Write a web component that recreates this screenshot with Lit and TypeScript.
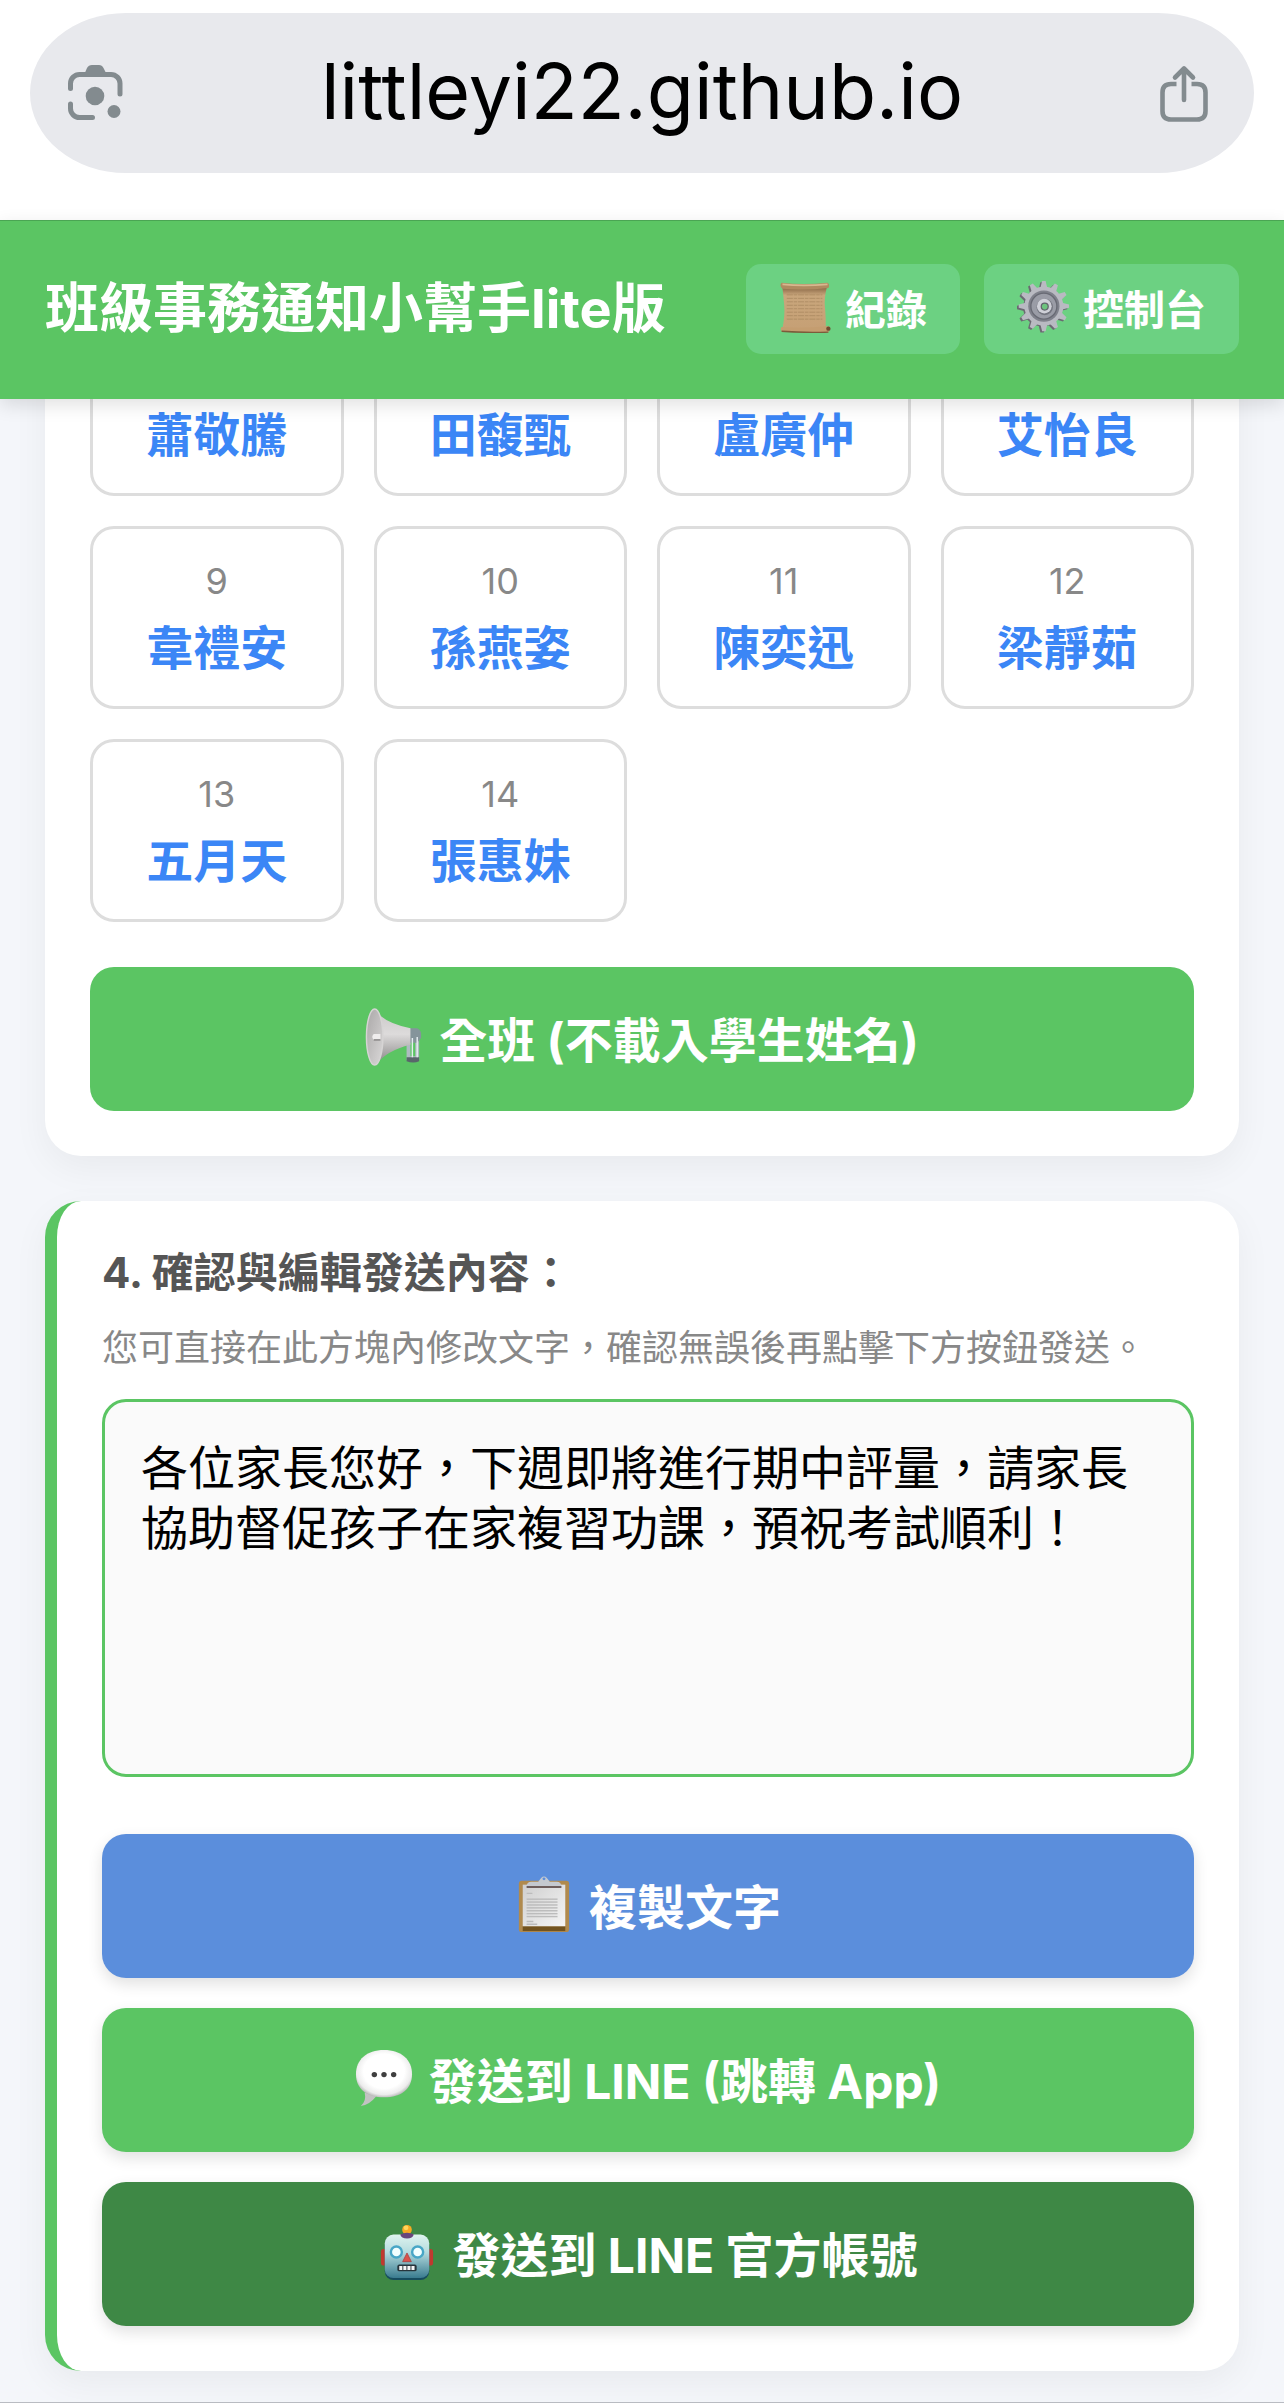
import { LitElement, css, html, svg } from "lit";
import { customElement, state } from "lit/decorators.js";

const SCROLL_LINES = [16, 20, 24, 28, 32, 36, 40, 44];
const PAPER_LINES = [25, 28, 31, 34, 37, 40, 43];
const GEAR_TEETH = Array.from({ length: 12 }, (_, i) => i * 30);

const lensIcon = html`
  <svg viewBox="0 0 60 60" aria-hidden="true">
    <g fill="none" stroke="#838b8f" stroke-width="5" stroke-linecap="round">
      <path d="M3.5 25.500V20.500A9 9 0 0 1 12.500 11.500H44A9 9 0 0 1 53 20.500V31" />
      <path d="M3.500 41V45.500A9 9 0 0 0 12.500 54.500H25.500" />
    </g>
    <path d="M17 12L20 5Q21.500 2 25 2H32Q35 2 36.500 5L40 12Z" fill="#838b8f" />
    <circle cx="28" cy="33" r="9.300" fill="#838b8f" />
    <circle cx="47" cy="48.500" r="6.500" fill="#838b8f" />
  </svg>
`;

const shareIcon = html`
  <svg viewBox="0 0 60 60" aria-hidden="true">
    <g fill="none" stroke="#838b8f" stroke-width="4.600">
      <path d="M19.500 21H14Q5.500 21 5.500 29.500V48Q5.500 56.500 14 56.500H40Q48.500 56.500 48.500 48V29.500Q48.500 21 40 21H34.500" />
      <path d="M27 37V6M18 14.500L27 5.500L36 14.500" stroke-linecap="round" stroke-linejoin="round" />
    </g>
  </svg>
`;

const scrollIcon = html`
  <svg viewBox="0 0 60 60" aria-hidden="true">
    <defs>
      <linearGradient id="paper" x1="0" x2="0" y1="0" y2="1">
        <stop offset="0" stop-color="#8d6a48" />
        <stop offset="0.180" stop-color="#c9a67c" />
        <stop offset="1" stop-color="#c6a075" />
      </linearGradient>
    </defs>
    <path d="M4 8H55Q52 20 53 30T54 55H4Q7 40 6 28T4 8Z" fill="url(#paper)" />
    <g stroke="#ad8b63" stroke-width="1" stroke-dasharray="7 1 4 1">
      ${SCROLL_LINES.map((y) => svg`<path d="M9 ${y}H50" />`)}
    </g>
    <path d="M3 2Q28 5 56 2Q59 4 57 8Q30 11 4 9Q0 5 3 2Z" fill="#b08a60" />
    <path d="M4 4Q28 6 56 4" fill="none" stroke="#d7b78f" stroke-width="2" />
    <path d="M3 53Q28 55 57 52Q60 55 57 59Q30 60 3 58Q1 55 3 53Z" fill="#c49d70" />
    <path d="M3 58Q30 60 57 59" fill="none" stroke="#7c5b3a" stroke-width="1.500" />
    <circle cx="57" cy="55" r="2.500" fill="#6f4c30" />
  </svg>
`;

const gearIcon = html`
  <svg viewBox="0 0 60 60" aria-hidden="true">
    <g transform="translate(-1 0.500)">
      <circle cx="30" cy="30" r="22" fill="#6b6a72" />
      ${GEAR_TEETH.map((a) => svg`<path d="M26 9L28 1H32L34 9Z" fill="#6b6a72" transform="rotate(${a} 30 30)" />`)}
    </g>
    <circle cx="31" cy="29" r="22.500" fill="#b9bac2" />
    ${GEAR_TEETH.map((a) => svg`<path d="M27 8L29 0H33L35 8Z" fill="#b9bac2" transform="rotate(${a} 31 29)" />`)}
    <circle cx="31" cy="29" r="18" fill="#7f818b" />
    <circle cx="31" cy="29" r="15" fill="#9a9ca6" stroke="#686a74" stroke-width="1.500" />
    <circle cx="32" cy="30" r="9.500" fill="#73757f" />
    <circle cx="31.500" cy="29" r="8.500" fill="#cfd0d8" />
    <circle cx="32" cy="29.500" r="4" fill="#6dc47e" stroke="#62656d" stroke-width="1.500" />
  </svg>
`;

const hornIcon = html`
  <svg viewBox="0 0 60 60" aria-hidden="true">
    <defs>
      <linearGradient id="cone" x1="0" x2="0" y1="0" y2="1">
        <stop offset="0" stop-color="#c9c7c7" />
        <stop offset="0.450" stop-color="#dddbdb" />
        <stop offset="1" stop-color="#858383" />
      </linearGradient>
      <linearGradient id="bell" x1="0" x2="1" y1="0" y2="1">
        <stop offset="0" stop-color="#a9a7a7" />
        <stop offset="1" stop-color="#dad8d8" />
      </linearGradient>
    </defs>
    <path d="M43 30V54H56V28H52V50H47V30Z" fill="#aebbc1" />
    <path d="M43 51H56V55Q50 58 43 55Z" fill="#59666b" />
    <path d="M46 21H54Q59 23 58 31L54 36H46Z" fill="#85949b" />
    <path d="M10 1Q18 15 47 21V38Q22 44 11 59Z" fill="url(#cone)" />
    <ellipse cx="10" cy="30" rx="8.500" ry="29" fill="url(#bell)" stroke="#d6d4d4" stroke-width="1.500" />
    <path d="M9 27H16V33H9Q6 30 9 27Z" fill="#efeded" />
    <path d="M9 33H16" stroke="#858383" stroke-width="1.500" />
    <path d="M49 31V51M54 30V51" stroke="#e5edf0" stroke-width="1.500" />
  </svg>
`;

const clipboardIcon = html`
  <svg viewBox="0 0 60 60" aria-hidden="true">
    <defs>
      <linearGradient id="sheet" x1="0" x2="1" y1="0" y2="1">
        <stop offset="0" stop-color="#cfcfcf" />
        <stop offset="1" stop-color="#f5f5f5" />
      </linearGradient>
    </defs>
    <rect x="4" y="6" width="52" height="53" rx="3" fill="#b08a4e" />
    <rect x="8" y="53" width="44" height="5" fill="#72531f" />
    <rect x="8" y="10" width="44" height="43" fill="url(#sheet)" />
    <g stroke="#bcbcbc" stroke-width="1.500">
      <path d="M12 19H18M12 48H19M12 51H23" />
      ${PAPER_LINES.map((y) => svg`<path d="M12 ${y}H44" />`)}
    </g>
    <path d="M12 12Q12 7 17 7H24L27 3Q30 0 33 3L36 7H43Q48 7 48 12Z" fill="#c5c9cf" />
    <path d="M12 12.500H48" stroke="#6e5e5c" stroke-width="2" />
    <circle cx="30" cy="4" r="1.500" fill="#5b8edc" />
  </svg>
`;

const chatIcon = html`
  <svg viewBox="0 0 60 60" aria-hidden="true">
    <defs>
      <radialGradient id="bubble" cx="0.500" cy="0.450" r="0.560">
        <stop offset="0.650" stop-color="#ffffff" />
        <stop offset="0.880" stop-color="#ececec" />
        <stop offset="1" stop-color="#b9b9b9" />
      </radialGradient>
    </defs>
    <path d="M10 45Q12 54 6 59Q15 58 22 49Z" fill="#c2c2c2" />
    <path d="M30 1C48 1 59 11 59 26C59 41 48 50 30 50C12 50 1 41 1 26C1 11 12 1 30 1Z" fill="url(#bubble)" />
    <g fill="#3f3f3f">
      <circle cx="20" cy="26.500" r="2.800" />
      <circle cx="30" cy="26.500" r="2.800" />
      <circle cx="40" cy="26.500" r="2.800" />
    </g>
  </svg>
`;

const robotIcon = html`
  <svg viewBox="0 0 60 60" aria-hidden="true">
    <defs>
      <linearGradient id="face" x1="0" x2="0" y1="0" y2="1">
        <stop offset="0" stop-color="#dff3ef" />
        <stop offset="0.400" stop-color="#b5dcdf" />
        <stop offset="1" stop-color="#397b8f" />
      </linearGradient>
    </defs>
    <rect x="3" y="27" width="6" height="17" rx="3" fill="#c0392f" />
    <rect x="51" y="27" width="6" height="17" rx="3" fill="#c0392f" />
    <circle cx="30" cy="7" r="5" fill="#f7a923" />
    <circle cx="29" cy="5" r="2.500" fill="#ffd65c" />
    <rect x="7" y="14" width="46" height="45" rx="9" fill="#164c5e" />
    <rect x="7" y="12" width="46" height="45" rx="9" fill="url(#face)" />
    <path d="M23 12Q26 10 30 10T37 12Q36 16 30 16T23 12Z" fill="#67467c" />
    <g fill="#f2ffff" stroke="#48a6c6" stroke-width="2.500">
      <circle cx="19" cy="30" r="5.700" />
      <circle cx="41" cy="30" r="5.700" />
    </g>
    <path d="M30 31L34.500 40H25.500Z" fill="#d9534b" stroke="#a83e40" stroke-width="0.800" />
    <rect x="20" y="43" width="20" height="7" rx="2" fill="#27353c" />
    <path d="M22 46.500H38" stroke="#f6f6f6" stroke-width="4" stroke-dasharray="3.200 1" />
  </svg>
`;

@customElement("app-root")
export class AppRoot extends LitElement {
  static styles = css`
    :host {
      display: block;
      min-height: 100vh;
      background: #f4f6fa;
      font-family: Inter, "Noto Sans CJK TC", sans-serif;
      --green: #5bc563;
    }

    * {
      box-sizing: border-box;
    }

    button {
      display: flex;
      align-items: center;
      justify-content: center;
      border: 0;
      padding: 0;
      font-family: inherit;
      cursor: pointer;
    }

    svg {
      display: block;
      width: 100%;
      height: 100%;
    }

    .browser {
      padding: 13px 30px 47px;
      background: #fff;
    }

    .address {
      display: grid;
      grid-template-columns: 60px 1fr 60px;
      align-items: center;
      height: 160px;
      padding: 0 37px;
      border-radius: 96px / 80px;
      background: #e8e9ed;
    }

    .address button {
      height: 60px;
      background: none;
    }

    .address input {
      width: 100%;
      height: 120px;
      border: 0;
      padding: 0 0 4px;
      background: none;
      color: #000;
      font-family: inherit;
      font-size: 77px;
      text-align: center;
    }

    .header {
      position: relative;
      z-index: 1;
      display: flex;
      align-items: center;
      justify-content: space-between;
      padding: 43px 45px 45px;
      border-top: 1px solid #4aa553;
      background: var(--green);
      box-shadow: 0 6px 18px rgba(0, 0, 0, 0.12);
    }

    h1 {
      margin: 0;
      color: #fff;
      font-size: 54px;
      line-height: 72px;
    }

    nav {
      display: flex;
      gap: 24px;
    }

    nav button {
      gap: 14px;
      height: 90px;
      padding: 0 33px 4px;
      border-radius: 15px;
      background: #6cd182;
      color: #fff;
      font-size: 41px;
      font-weight: 700;
    }

    .nav-icon {
      width: 52px;
      height: 52px;
    }

    main {
      display: flex;
      flex-direction: column;
      gap: 45px;
      padding: 0 45px 31px;
      border-bottom: 1px solid #b9bcc2;
    }

    .card {
      padding: 45px;
      border-radius: 36px;
      background: #fff;
      box-shadow: 0 12px 36px rgba(0, 0, 0, 0.05);
    }

    /* the list is scrolled up under the sticky header */
    .students {
      margin-top: -131px;
    }

    .grid {
      display: grid;
      grid-template-columns: repeat(4, 1fr);
      gap: 30px;
      margin-bottom: 45px;
    }

    .student {
      flex-direction: column;
      gap: 15px;
      padding: 30px 0;
      border: 3px solid #ddd;
      border-radius: 24px;
      background: #fff;
    }

    .number {
      color: #888;
      font-size: 36px;
      line-height: 45px;
    }

    .name {
      color: #3b86f6;
      font-size: 47px;
      font-weight: 700;
      line-height: 57px;
    }

    .wide {
      gap: 16px;
      width: 100%;
      height: 144px;
      padding-bottom: 4px;
      border-radius: 24px;
      background: var(--green);
      color: #fff;
      font-size: 48px;
      font-weight: 700;
    }

    .wide-icon {
      width: 58px;
      height: 58px;
    }

    .editor {
      border-left: 12px solid var(--green);
    }

    .editor label {
      display: block;
      color: #555;
      font-size: 42px;
      font-weight: 700;
      line-height: 54px;
    }

    .hint {
      margin: 21px 0 24px;
      color: #888;
      font-size: 36px;
      line-height: 54px;
    }

    textarea {
      display: block;
      width: 100%;
      height: 378px;
      padding: 36px;
      border: 3px solid var(--green);
      border-radius: 24px;
      outline: none;
      resize: none;
      background: #fafafa;
      color: #000;
      font-family: inherit;
      font-size: 47px;
      line-height: 60px;
    }

    .actions {
      display: flex;
      flex-direction: column;
      gap: 30px;
      margin-top: 57px;
    }

    .actions .wide {
      box-shadow: 0 6px 15px rgba(0, 0, 0, 0.12);
    }

    .actions .copy {
      background: #5b8edc;
    }

    .actions .official {
      background: #3e8845;
    }
  `;

  @state()
  private message =
    "各位家長您好，下週即將進行期中評量，請家長協助督促孩子在家複習功課，預祝考試順利！";

  private students = [
    { number: 5, name: "蕭敬騰" },
    { number: 6, name: "田馥甄" },
    { number: 7, name: "盧廣仲" },
    { number: 8, name: "艾怡良" },
    { number: 9, name: "韋禮安" },
    { number: 10, name: "孫燕姿" },
    { number: 11, name: "陳奕迅" },
    { number: 12, name: "梁靜茹" },
    { number: 13, name: "五月天" },
    { number: 14, name: "張惠妹" },
  ];

  render() {
    return html`
      <div class="browser">
        <div class="address">
          <button aria-label="相機搜尋">${lensIcon}</button>
          <input type="text" aria-label="網址" value="littleyi22.github.io" />
          <button aria-label="分享">${shareIcon}</button>
        </div>
      </div>

      <header class="header">
        <h1>班級事務通知小幫手lite版</h1>
        <nav>
          <button><span class="nav-icon">${scrollIcon}</span>紀錄</button>
          <button><span class="nav-icon">${gearIcon}</span>控制台</button>
        </nav>
      </header>

      <main>
        <section class="card students">
          <div class="grid">
            ${this.students.map(
              (s) => html`
                <button class="student">
                  <span class="number">${s.number}</span>
                  <span class="name">${s.name}</span>
                </button>
              `
            )}
          </div>
          <button class="wide">
            <span class="wide-icon">${hornIcon}</span>全班 (不載入學生姓名)
          </button>
        </section>

        <section class="card editor">
          <label for="message">4. 確認與編輯發送內容：</label>
          <p class="hint">您可直接在此方塊內修改文字，確認無誤後再點擊下方按鈕發送。</p>
          <textarea id="message" spellcheck="false" .value=${this.message} @input=${this.onInput}></textarea>
          <div class="actions">
            <button class="wide copy" @click=${this.copy}>
              <span class="wide-icon">${clipboardIcon}</span>複製文字
            </button>
            <button class="wide">
              <span class="wide-icon">${chatIcon}</span>發送到 LINE (跳轉 App)
            </button>
            <button class="wide official">
              <span class="wide-icon">${robotIcon}</span>發送到 LINE 官方帳號
            </button>
          </div>
        </section>
      </main>
    `;
  }

  private onInput(e: Event) {
    this.message = (e.target as HTMLTextAreaElement).value;
  }

  private copy() {
    navigator.clipboard?.writeText(this.message);
  }
}
